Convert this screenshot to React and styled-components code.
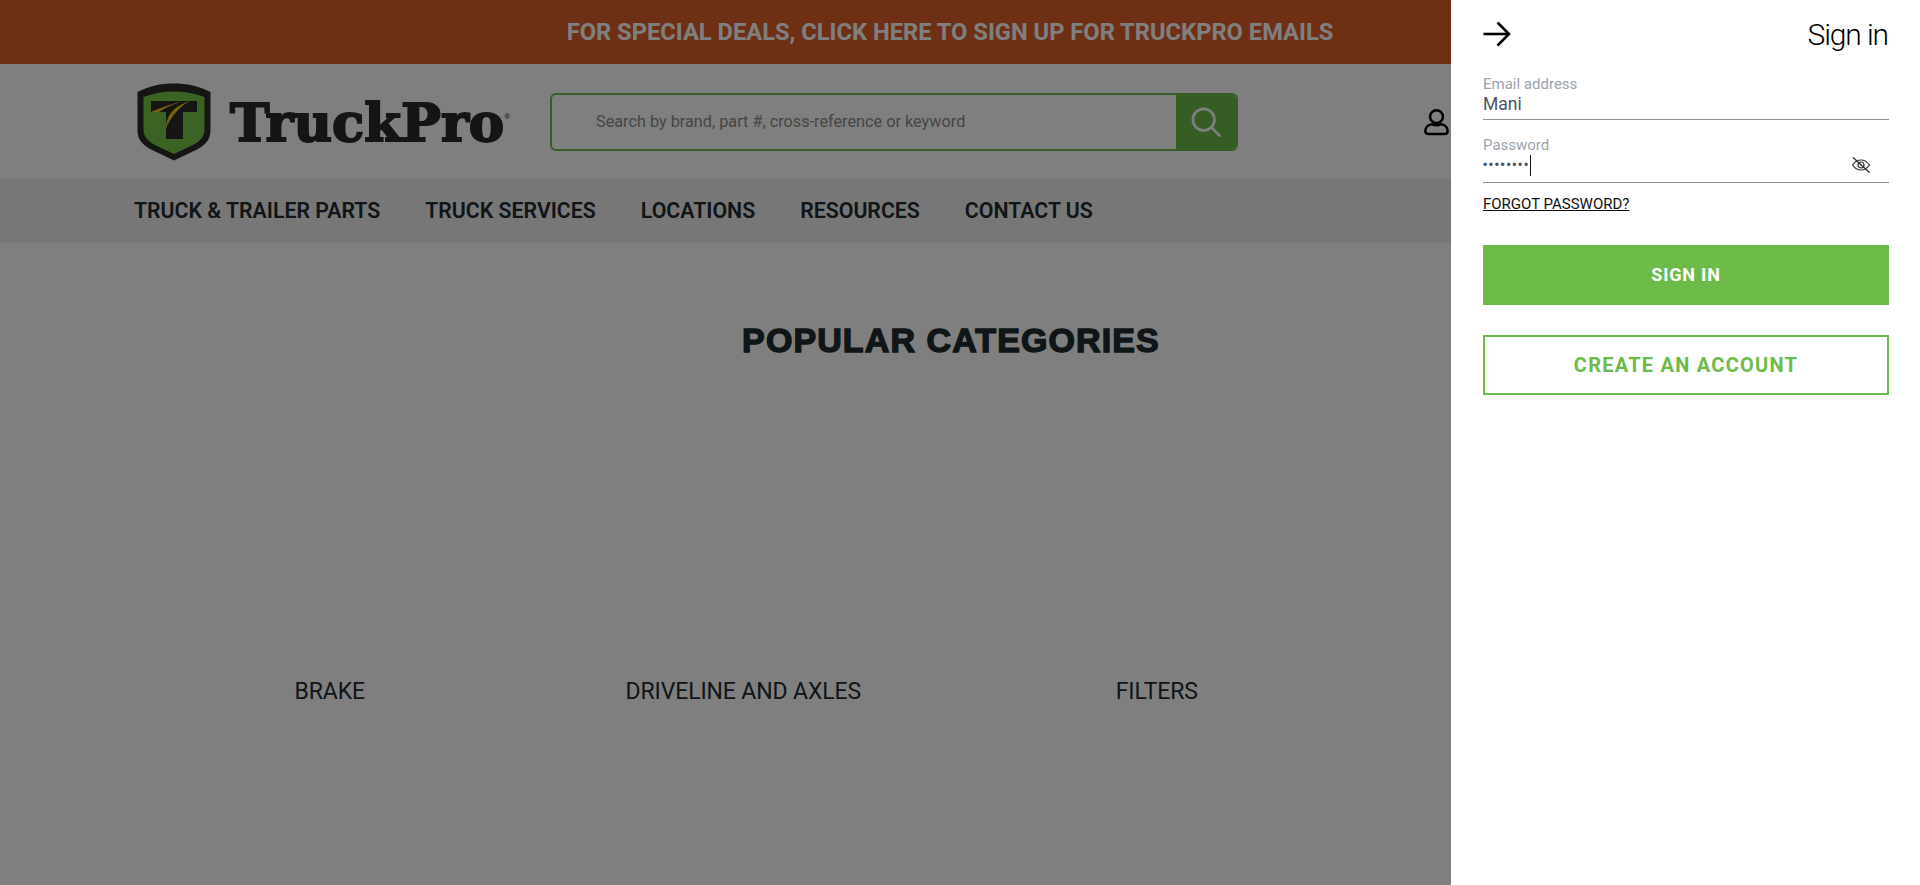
import React from "react";
import styled, { createGlobalStyle } from "styled-components";

const Global = createGlobalStyle`
  html, body { margin: 0; padding: 0; height: 100%; background: #fff; overflow: hidden; }
  * { box-sizing: border-box; }
  body { font-family: Roboto, "Liberation Sans", sans-serif; }
`;

const Page = styled.div`
  width: 1920px;
  height: 885px;
  display: flex;
  flex-direction: column;
`;
const Banner = styled.div`
  height: 64px;
  flex: none;
  background: #dd5f29;
  color: #fff;
  display: flex;
  align-items: center;
  justify-content: center;
  padding-right: 20px;
  font-size: 23.7px;
  font-weight: 700;
`;
const Header = styled.header`
  height: 114px;
  flex: none;
  display: flex;
  align-items: center;
  padding: 2px 0 0 137px;
`;
const Logo = styled.div`
  display: flex;
  align-items: center;
  gap: 19px;
  width: 413px;
  flex: none;
`;
const Wordmark = styled.div`
  font-family: "DejaVu Serif", serif;
  font-weight: 700;
  font-size: 53px;
  line-height: 1;
  letter-spacing: 0;
  color: #2b2a29;
  -webkit-text-stroke: 2px #2b2a29;
  white-space: nowrap;
  position: relative;
  & sup {
    font-family: "Liberation Sans", sans-serif;
    font-size: 8px;
    font-weight: 400;
    letter-spacing: 0;
    -webkit-text-stroke: 0;
    vertical-align: 22px;
    line-height: 0;
  }
`;
const Search = styled.div`
  width: 688px;
  height: 58px;
  flex: none;
  display: flex;
  border: 2px solid #6cbb49;
  border-radius: 6px;
  overflow: hidden;
`;
const SearchField = styled.div`
  flex: 1;
  display: flex;
  align-items: center;
  padding: 0 0 2px 44px;
  font-size: 16.25px;
  color: #8c8c8c;
`;
const SearchButton = styled.div`
  width: 60px;
  background: #6cbb49;
  display: flex;
  align-items: center;
  justify-content: center;
`;
const Account = styled.div`
  margin-left: 186px;
  display: flex;
  align-items: center;
  color: #000;
`;
const Nav = styled.nav`
  height: 65px;
  flex: none;
  background: #eeeeee;
  display: flex;
  align-items: center;
  gap: 45px;
  padding: 0 0 1px 134px;
`;
const NavItem = styled.span`
  font-size: 21.3px;
  font-weight: 600;
  color: #212b30;
  white-space: nowrap;
`;
const Main = styled.main`
  flex: 1;
  display: flex;
  flex-direction: column;
`;
const Title = styled.h2`
  margin: 77px 0 0;
  width: 1902px;
  text-align: center;
  font-family: "Liberation Sans", sans-serif;
  font-weight: 700;
  font-size: 34px;
  line-height: 40px;
  letter-spacing: 1.1px;
  color: #212b30;
  -webkit-text-stroke: 1.4px #212b30;
`;
const Categories = styled.div`
  margin-top: 318px;
  display: grid;
  grid-template-columns: repeat(3, 413.5px);
  padding-left: 123px;
`;
const Category = styled.div`
  text-align: center;
  font-size: 23px;
  line-height: 28px;
  letter-spacing: -0.13px;
  color: #212b30;
`;
const Overlay = styled.div`
  position: fixed;
  inset: 0;
  background: rgba(0, 0, 0, 0.5);
`;
const Drawer = styled.aside`
  position: fixed;
  top: 0;
  right: 0;
  bottom: 0;
  width: 469px;
  background: #fff;
  padding: 0 31px 0 32px;
  display: flex;
  flex-direction: column;
`;
const DrawerHead = styled.div`
  height: 68px;
  display: flex;
  align-items: center;
  justify-content: space-between;
  flex: none;
`;
const DrawerTitle = styled.div`
  font-size: 30px;
  font-weight: 300;
  letter-spacing: -1.1px;
  margin-right: 1px;
  color: #000;
`;
const Field = styled.div`
  height: ${(p) => p.$h}px;
  margin-top: ${(p) => p.$top}px;
  border-bottom: 1px solid #8e949c;
  display: flex;
  flex-direction: column;
  flex: none;
  position: relative;
`;
const Label = styled.label`
  font-size: 15px;
  line-height: 16px;
  color: #9ca3af;
`;
const Value = styled.div`
  margin-top: 1px;
  font-size: 17.5px;
  line-height: 22px;
  color: #4b5563;
`;
const Dots = styled.div`
  margin-top: 1px;
  display: flex;
  align-items: center;
  height: 22px;
  font-family: "Liberation Sans", sans-serif;
  font-size: 12px;
  letter-spacing: 1.65px;
  color: #4b5563;
`;
const Caret = styled.span`
  width: 1px;
  height: 21px;
  background: #111;
`;
const EyeButton = styled.span`
  position: absolute;
  right: 18px;
  top: 20px;
  display: flex;
`;
const Forgot = styled.a`
  margin-top: 13px;
  font-size: 15px;
  line-height: 17px;
  color: #111;
  text-decoration: underline;
  align-self: flex-start;
`;
const Button = styled.button`
  height: 60px;
  flex: none;
  margin-top: ${(p) => p.$top}px;
  padding: 0 0 ${(p) => (p.$outline ? 0 : 1)}px;
  background: ${(p) => (p.$outline ? "#fff" : "#6cbb49")};
  color: ${(p) => (p.$outline ? "#6cbb49" : "#fff")};
  border: 2px solid #6cbb49;
  border-radius: 0;
  font-family: Roboto, sans-serif;
  font-size: ${(p) => (p.$outline ? 20 : 18)}px;
  font-weight: 700;
  letter-spacing: ${(p) => (p.$outline ? 1.25 : 0.8)}px;
`;

const Shield = () => (
  <svg width="74" height="78" viewBox="0 0 74 78" style={{ flex: "none" }}>
    <path d="M0.5 9 C12 3 24 0.5 37 0.5 C50 0.5 62 3 73.5 9 V47 C73.5 57 68 62 60 66.5 L37 77.5 L14 66.5 C6 62 0.5 57 0.5 47 Z" fill="#2b2a29" />
    <path d="M6.5 14 C17 10 27 8.5 37 8.5 C47 8.5 57 10 67.5 14 V46 C67.5 54 63 58 56 62 L37 71 L18 62 C11 58 6.5 54 6.5 46 Z" fill="#74c748" />
    <path d="M14 18 H60 V29 H46 V56 H29 V29 H14 Z" fill="#2b2a29" />
    <path d="M14.5 28.5 C26 24 37 20 47 17.5 C37 21 27 25 21 30 Z" fill="#e5c01f" />
    <path d="M29 46 C29 36 33 29 40 24 C45 21 49 19 53 17.5 C46 22 40 27 36 33 C33 37 30 42 29 46 Z" fill="#e5c01f" />
  </svg>
);
const Magnifier = () => (
  <svg width="30" height="30" viewBox="0 0 32 32" fill="none" stroke="#fff" strokeWidth="2.8" strokeLinecap="round">
    <circle cx="13.5" cy="13.5" r="11.5" />
    <path d="M22 22 L30.5 30.5" />
  </svg>
);
const User = () => (
  <svg width="25" height="28" viewBox="0 0 28 30" fill="none" stroke="#000" strokeWidth="2.8">
    <circle cx="14" cy="9" r="7.2" />
    <path d="M9 17.5 C5 18 1.5 21 1.5 25 C1.5 27.5 3 28.5 5 28.5 H23 C25 28.5 26.5 27.5 26.5 25 C26.5 21 23 18 19 17.5 C16 19 12 19 9 17.5 Z" />
  </svg>
);
const Arrow = () => (
  <svg width="28" height="26" viewBox="0 0 28 26" fill="none" stroke="#000" strokeWidth="2.6">
    <path d="M0.5 13 H26" />
    <path d="M14.5 1.5 L26 13 L14.5 24.5" />
  </svg>
);
const EyeOff = () => (
  <svg width="20" height="16" viewBox="0 0 20 16" fill="none" stroke="#333" strokeWidth="1.2">
    <path d="M1.5 8 C4 4.5 7 3 10 3 C13 3 16 4.5 18.5 8 C16 11.5 13 13 10 13 C7 13 4 11.5 1.5 8 Z" />
    <circle cx="10" cy="8" r="3" />
    <path d="M2 0.5 L18.5 15.5" strokeWidth="1.4" />
  </svg>
);

export default function App() {
  return (
    <>
      <Global />
      <Page>
        <Banner>FOR SPECIAL DEALS, CLICK HERE TO SIGN UP FOR TRUCKPRO EMAILS</Banner>
        <Header>
          <Logo>
            <Shield />
            <Wordmark>TruckPro<sup>®</sup></Wordmark>
          </Logo>
          <Search>
            <SearchField>Search by brand, part #, cross-reference or keyword</SearchField>
            <SearchButton><Magnifier /></SearchButton>
          </Search>
          <Account><User /></Account>
        </Header>
        <Nav>
          <NavItem>TRUCK &amp; TRAILER PARTS</NavItem>
          <NavItem>TRUCK SERVICES</NavItem>
          <NavItem>LOCATIONS</NavItem>
          <NavItem>RESOURCES</NavItem>
          <NavItem>CONTACT US</NavItem>
        </Nav>
        <Main>
          <Title>POPULAR CATEGORIES</Title>
          <Categories>
            <Category>BRAKE</Category>
            <Category>DRIVELINE AND AXLES</Category>
            <Category>FILTERS</Category>
          </Categories>
        </Main>
      </Page>
      <Overlay />
      <Drawer>
        <DrawerHead>
          <Arrow />
          <DrawerTitle>Sign in</DrawerTitle>
        </DrawerHead>
        <Field $h={44} $top={8}>
          <Label>Email address</Label>
          <Value>Mani</Value>
        </Field>
        <Field $h={46} $top={17}>
          <Label>Password</Label>
          <Dots>••••••••<Caret /></Dots>
          <EyeButton><EyeOff /></EyeButton>
        </Field>
        <Forgot>FORGOT PASSWORD?</Forgot>
        <Button $top={32}>SIGN IN</Button>
        <Button $top={30} $outline>CREATE AN ACCOUNT</Button>
      </Drawer>
    </>
  );
}
